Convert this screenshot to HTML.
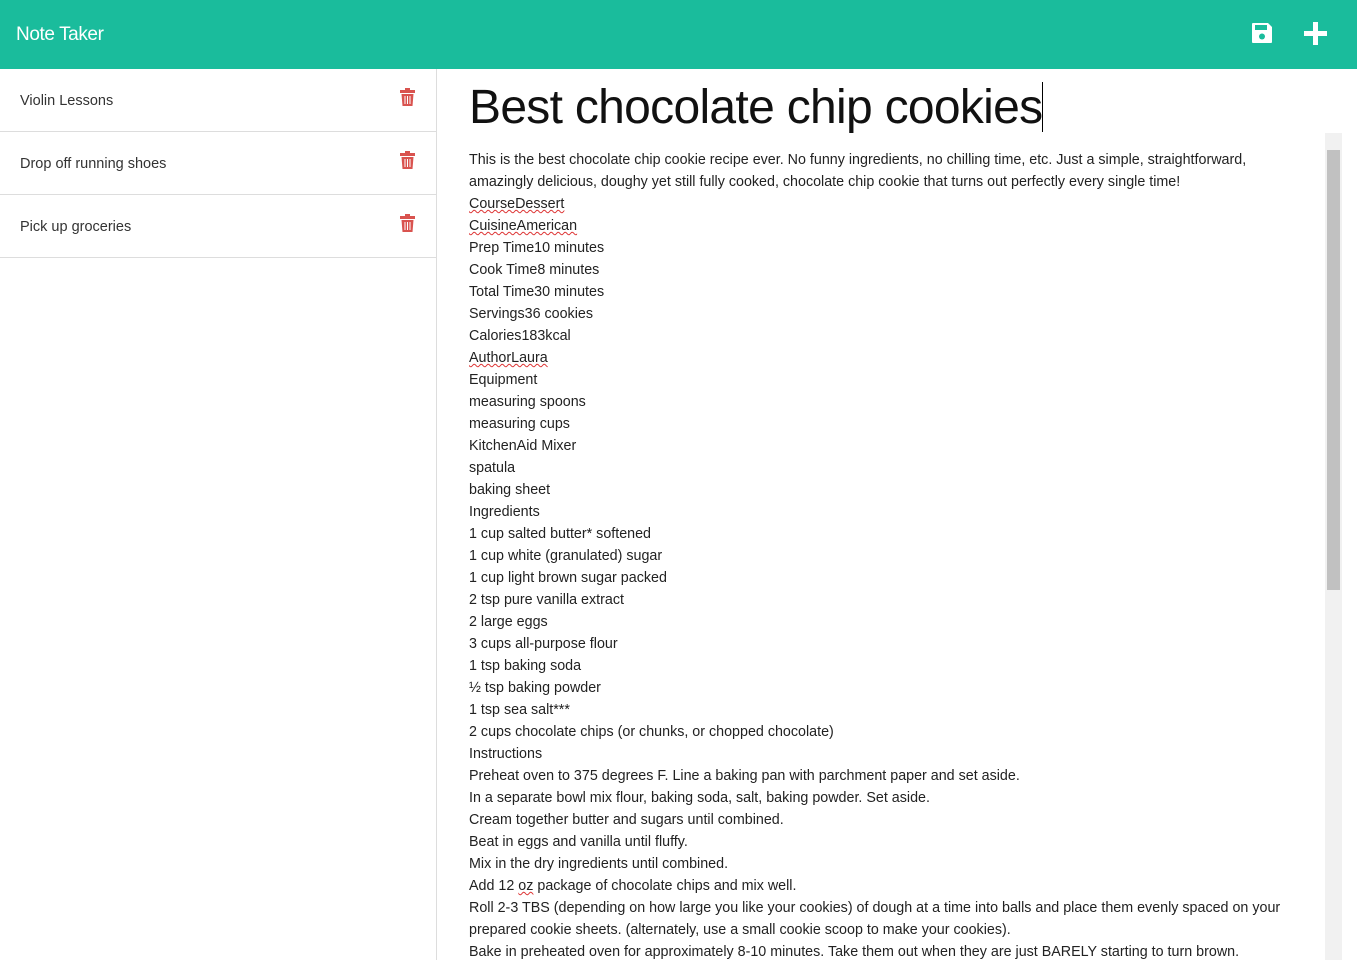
<!DOCTYPE html>
<html><head><meta charset="utf-8"><style>
body{margin:0;width:1357px;height:960px;overflow:hidden;font-family:"Liberation Sans",sans-serif;background:#fff;color:#333}
.nav{height:69px;background:#1abc9c;position:relative}
.nav .brand{position:absolute;left:16px;top:24px;color:#fff;font-size:19px;letter-spacing:-0.4px}
.side{position:absolute;left:0;top:69px;width:436px;height:891px;border-right:1px solid #ddd}
.item{height:62px;border-bottom:1px solid #ddd;position:relative;font-size:14.5px;color:#333}
.item span{position:absolute;left:20px;top:24px}
.item svg{position:absolute;left:400px;top:19px}
.title{position:absolute;left:469px;top:80px;font-size:48px;color:#111;letter-spacing:-0.7px}
.caret{position:absolute;left:1042px;top:82px;width:1px;height:50px;background:#000}
.body{position:absolute;left:469px;top:149px;width:830px;font-size:14.3px;line-height:22px;color:#222}
.u{text-decoration:underline wavy #d33;text-decoration-thickness:1px}
.sb{position:absolute;left:1325px;top:133px;width:17px;height:827px;background:#f1f1f1}
.th{position:absolute;left:2px;top:17px;width:13px;height:440px;background:#c1c1c1}
</style></head><body>
<div class="nav"><span class="brand">Note Taker</span>
<svg style="position:absolute;left:1251px;top:22px" width="22" height="22" viewBox="0 0 22 22"><path d="M2 1h15l4 4v15a1 1 0 0 1-1 1H2a1 1 0 0 1-1-1V2a1 1 0 0 1 1-1z" fill="#fff"/><rect x="4" y="3" width="12" height="5" fill="#1abc9c"/><circle cx="11" cy="14.5" r="3" fill="#1abc9c"/></svg>
<svg style="position:absolute;left:1304px;top:22px" width="23" height="23" viewBox="0 0 23 23"><path d="M9 0h5v9h9v5h-9v9H9v-9H0V9h9z" fill="#fff"/></svg>
</div>
<div class="side">
<div class="item"><span>Violin Lessons</span><svg width="15" height="18" viewBox="0 0 15 18"><rect x="0" y="2" width="15" height="3" fill="#d9534f"/><rect x="5" y="0" width="5" height="3" fill="#d9534f"/><path d="M1.5 6h12l-1 12h-10z" fill="#d9534f"/><path d="M5 8v8M7.5 8v8M10 8v8" stroke="#fff" stroke-width="1"/></svg></div>
<div class="item"><span>Drop off running shoes</span><svg width="15" height="18" viewBox="0 0 15 18"><rect x="0" y="2" width="15" height="3" fill="#d9534f"/><rect x="5" y="0" width="5" height="3" fill="#d9534f"/><path d="M1.5 6h12l-1 12h-10z" fill="#d9534f"/><path d="M5 8v8M7.5 8v8M10 8v8" stroke="#fff" stroke-width="1"/></svg></div>
<div class="item"><span>Pick up groceries</span><svg width="15" height="18" viewBox="0 0 15 18"><rect x="0" y="2" width="15" height="3" fill="#d9534f"/><rect x="5" y="0" width="5" height="3" fill="#d9534f"/><path d="M1.5 6h12l-1 12h-10z" fill="#d9534f"/><path d="M5 8v8M7.5 8v8M10 8v8" stroke="#fff" stroke-width="1"/></svg></div>
</div>
<div class="title">Best chocolate chip cookies</div><div class="caret"></div>
<div class="body">This is the best chocolate chip cookie recipe ever. No funny ingredients, no chilling time, etc. Just a simple, straightforward, amazingly delicious, doughy yet still fully cooked, chocolate chip cookie that turns out perfectly every single time!<br>
<span class="u">CourseDessert</span><br><span class="u">CuisineAmerican</span><br>Prep Time10 minutes<br>Cook Time8 minutes<br>Total Time30 minutes<br>Servings36 cookies<br>Calories183kcal<br><span class="u">AuthorLaura</span><br>Equipment<br>measuring spoons<br>measuring cups<br>KitchenAid Mixer<br>spatula<br>baking sheet<br>Ingredients<br>1 cup salted butter* softened<br>1 cup white (granulated) sugar<br>1 cup light brown sugar packed<br>2 tsp pure vanilla extract<br>2 large eggs<br>3 cups all-purpose flour<br>1 tsp baking soda<br>½ tsp baking powder<br>1 tsp sea salt***<br>2 cups chocolate chips (or chunks, or chopped chocolate)<br>Instructions<br>Preheat oven to 375 degrees F. Line a baking pan with parchment paper and set aside.<br>In a separate bowl mix flour, baking soda, salt, baking powder. Set aside.<br>Cream together butter and sugars until combined.<br>Beat in eggs and vanilla until fluffy.<br>Mix in the dry ingredients until combined.<br>Add 12 <span class="u">oz</span> package of chocolate chips and mix well.<br>Roll 2-3 TBS (depending on how large you like your cookies) of dough at a time into balls and place them evenly spaced on your prepared cookie sheets. (alternately, use a small cookie scoop to make your cookies).<br>Bake in preheated oven for approximately 8-10 minutes. Take them out when they are just BARELY starting to turn brown.</div>
<div class="sb"><div class="th"></div></div>
</body></html>
